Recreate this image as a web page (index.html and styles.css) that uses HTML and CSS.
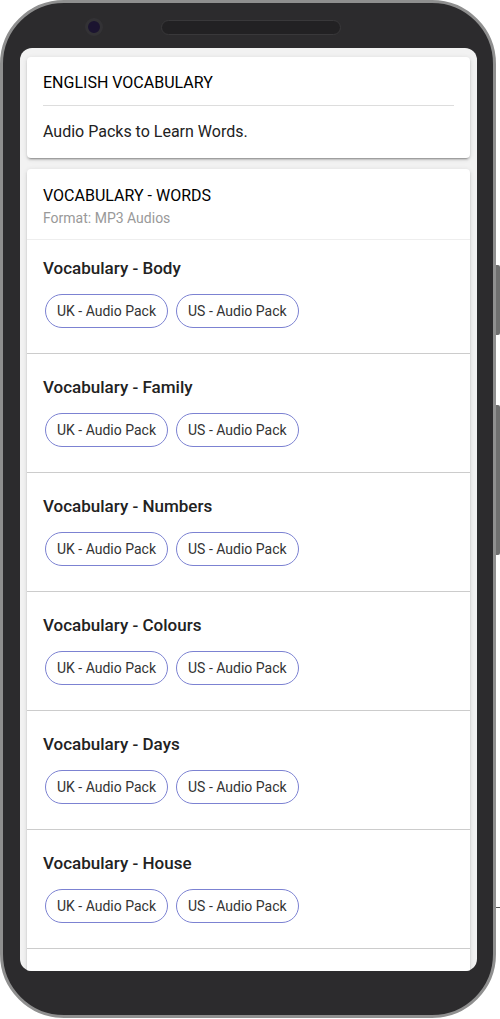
FILE: index.html
```html
<!DOCTYPE html>
<html lang="en">
<head>
<meta charset="utf-8">
<title>English Vocabulary</title>
<link rel="stylesheet" href="styles.css">
</head>
<body>
<div class="stage">
  <div class="backline"></div>
  <div class="phone">
    <div class="btn btn-a"></div>
    <div class="btn btn-b"></div>
    <div class="topbar">
      <div class="camera"></div>
      <div class="speaker"></div>
    </div>
    <div class="screen">
      <div class="card intro">
        <div class="card-title">ENGLISH VOCABULARY</div>
        <div class="rule"></div>
        <div class="card-body">Audio Packs to Learn Words.</div>
      </div>
      <div class="card words">
        <div class="words-head">
          <div class="card-title">VOCABULARY - WORDS</div>
          <div class="subtitle">Format: MP3 Audios</div>
        </div>
        <div class="item">
          <div class="item-title">Vocabulary - Body</div>
          <div class="chips"><span class="chip">UK - Audio Pack</span><span class="chip">US - Audio Pack</span></div>
        </div>
        <div class="item">
          <div class="item-title">Vocabulary - Family</div>
          <div class="chips"><span class="chip">UK - Audio Pack</span><span class="chip">US - Audio Pack</span></div>
        </div>
        <div class="item">
          <div class="item-title">Vocabulary - Numbers</div>
          <div class="chips"><span class="chip">UK - Audio Pack</span><span class="chip">US - Audio Pack</span></div>
        </div>
        <div class="item">
          <div class="item-title">Vocabulary - Colours</div>
          <div class="chips"><span class="chip">UK - Audio Pack</span><span class="chip">US - Audio Pack</span></div>
        </div>
        <div class="item">
          <div class="item-title">Vocabulary - Days</div>
          <div class="chips"><span class="chip">UK - Audio Pack</span><span class="chip">US - Audio Pack</span></div>
        </div>
        <div class="item">
          <div class="item-title">Vocabulary - House</div>
          <div class="chips"><span class="chip">UK - Audio Pack</span><span class="chip">US - Audio Pack</span></div>
        </div>
        <div class="item">
          <div class="item-title">Vocabulary - Clothes</div>
          <div class="chips"><span class="chip">UK - Audio Pack</span><span class="chip">US - Audio Pack</span></div>
        </div>
      </div>
    </div>
  </div>
</div>
</body>
</html>
```

FILE: styles.css
```css
* { box-sizing: border-box; }
html, body {
  margin: 0;
  padding: 0;
  background: #ffffff;
  font-family: Roboto, "Liberation Sans", Arial, sans-serif;
}
.stage {
  position: relative;
  width: 500px;
  height: 1019px;
  overflow: hidden;
}
.backline {
  position: absolute;
  left: 0;
  right: 0;
  top: 907px;
  height: 1px;
  background: #555;
}
.phone {
  position: relative;
  width: 496px;
  height: 1018px;
  border: 3px solid #8f8f8f;
  border-radius: 64px;
  background: #2c2b2d;
  padding: 0 16px 44px 17px;
  display: flex;
  flex-direction: column;
}
.btn {
  position: absolute;
  right: -7px;
  width: 4px;
  background: #6f6f6f;
  border-radius: 0 2px 2px 0;
}
.btn-a { top: 262px; height: 70px; }
.btn-b { top: 402px; height: 150px; }
.topbar {
  height: 45px;
  flex: none;
  display: flex;
  align-items: center;
  padding-top: 3px;
  padding-left: 65px;
  gap: 58px;
}
.camera {
  width: 18px;
  height: 18px;
  border-radius: 50%;
  background: #1b1430;
  border: 3px solid #333235;
}
.speaker {
  width: 180px;
  height: 15px;
  border-radius: 8px;
  background: #222123;
  border: 1px solid #39383a;
}
.screen {
  flex: 1;
  background: #f2f2f2;
  border-radius: 12px;
  overflow: hidden;
  padding: 9px 7px 0;
  display: flex;
  flex-direction: column;
  gap: 11px;
}
.card {
  background: #ffffff;
  border-radius: 4px;
  flex: none;
  box-shadow: 0 3px 1px -2px rgba(0,0,0,0.2), 0 2px 2px 0 rgba(0,0,0,0.14), 0 1px 5px 0 rgba(0,0,0,0.12);
}
.intro {
  padding: 16px;
}
.card-title {
  font-size: 16px;
  line-height: 20px;
  color: #000;
  font-weight: 400;
}
.rule {
  height: 1px;
  background: #dddddd;
  margin-top: 12px;
}
.card-body {
  margin-top: 16px;
  font-size: 16px;
  line-height: 20px;
  color: #222;
}
.words-head {
  padding: 17px 16px 11px;
  border-bottom: 1px solid #eeeeee;
}
.subtitle {
  margin-top: 2px;
  font-size: 14px;
  line-height: 20px;
  color: #999999;
}
.item {
  padding: 23px 16px 25px;
  border-bottom: 1px solid #cccccc;
}
.words-head + .item {
  padding-top: 18px;
}
.item-title {
  font-size: 17px;
  line-height: 20px;
  font-weight: 500;
  color: #222222;
}
.chips {
  margin-top: 16px;
  margin-left: 2px;
  display: flex;
  gap: 8px;
}
.chip {
  height: 34px;
  display: inline-flex;
  align-items: center;
  padding: 0 11px;
  border: 1px solid #7c82d2;
  border-radius: 17px;
  font-size: 14px;
  color: #333333;
  white-space: nowrap;
}
```
